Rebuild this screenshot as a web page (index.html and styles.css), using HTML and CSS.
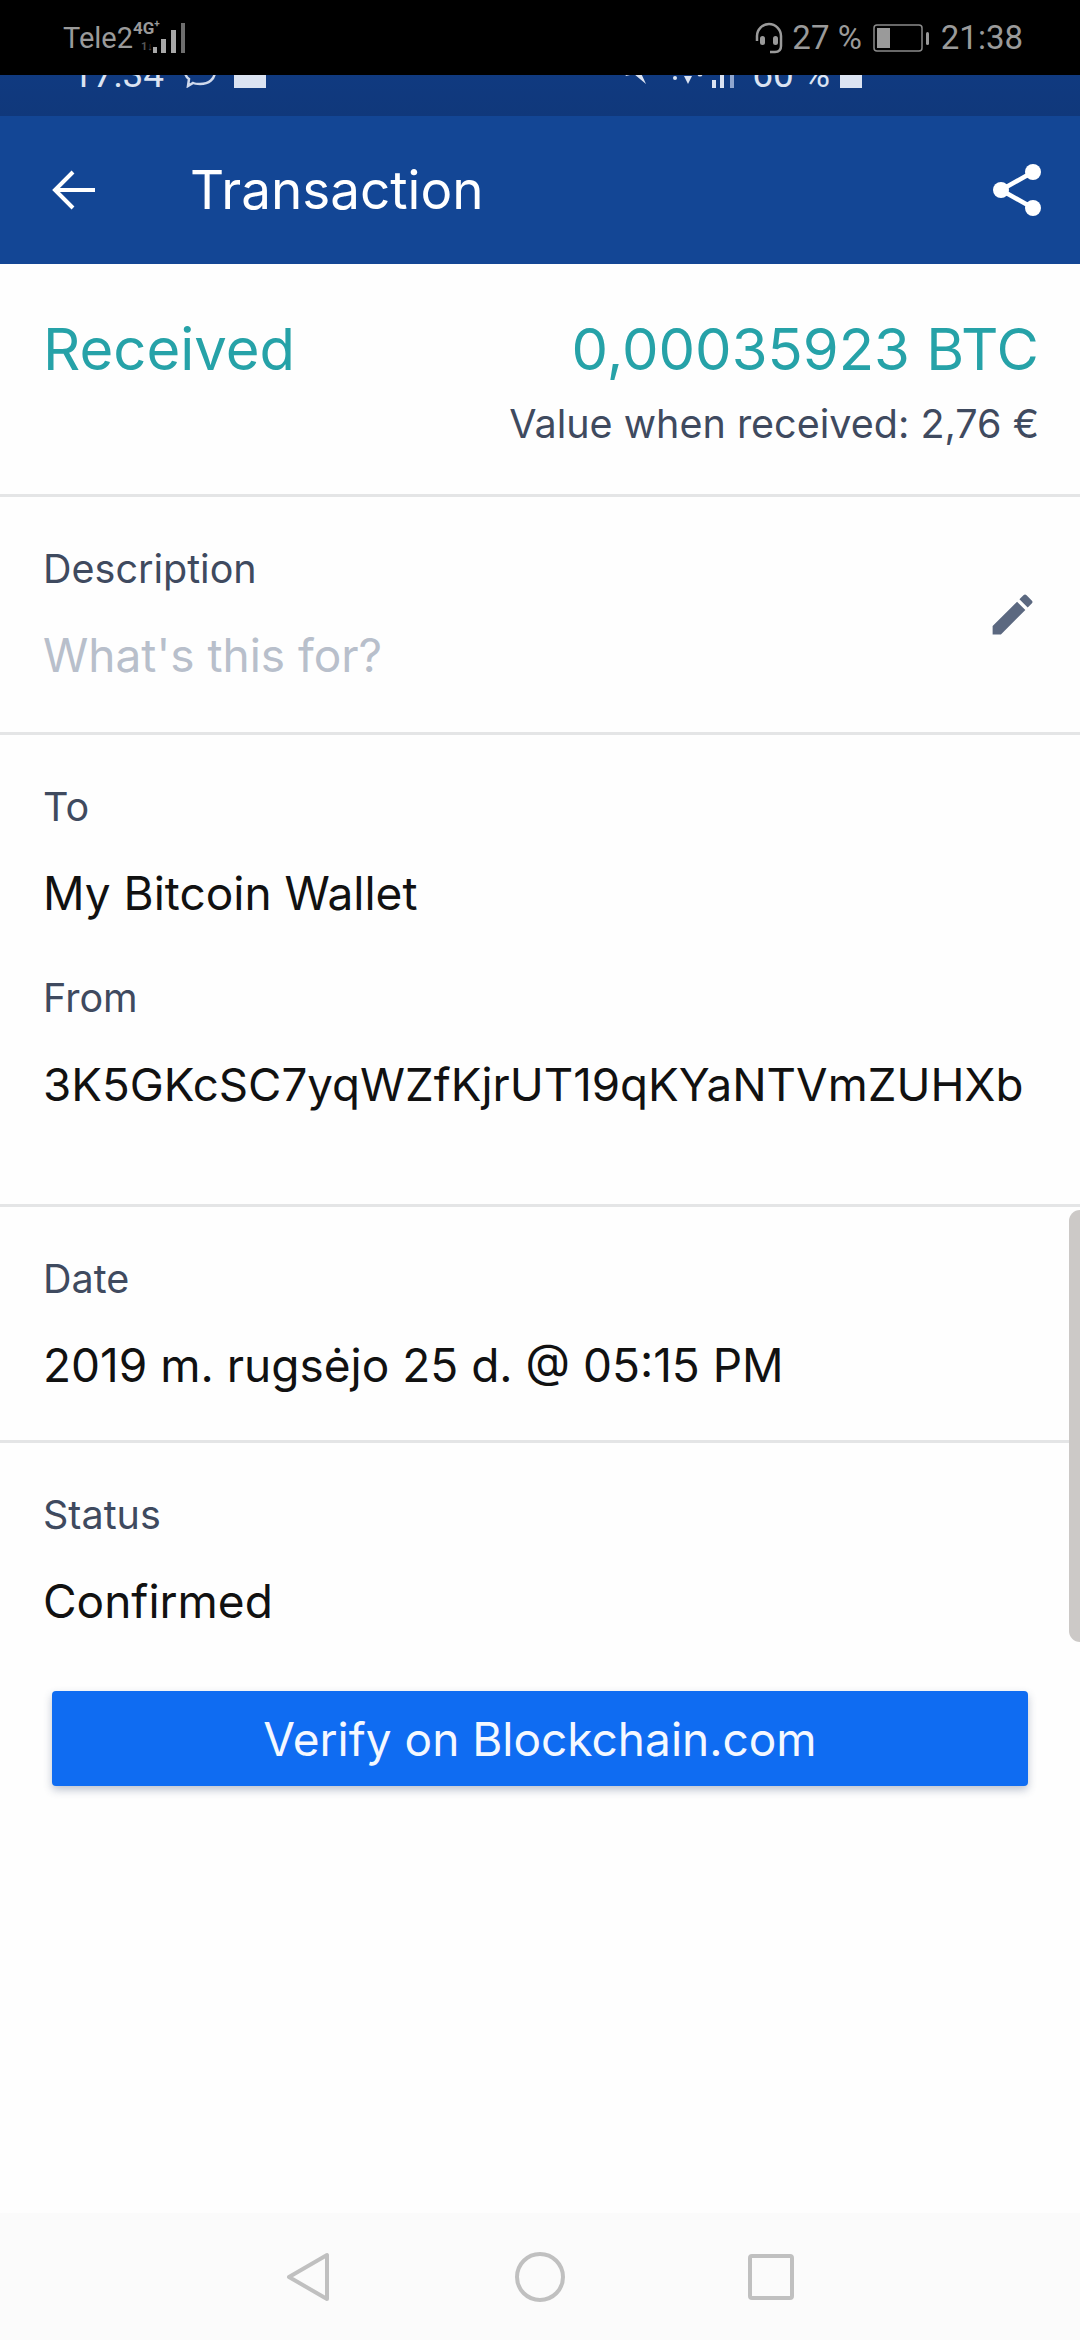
FILE: index.html
```html
<!DOCTYPE html>
<html lang="en">
<head>
    <meta charset="UTF-8">
    <meta name="viewport" content="width=device-width, initial-scale=1.0">
    <title>Transaction</title>
    <link rel="stylesheet" href="styles.css">
</head>
<body>
    <div class="phone">
        <div class="status-bar">
            <div class="status-left">
                <span class="carrier">Tele2</span>
                <div class="net-type">
                    <span class="net-name">4G<sup>+</sup></span>
                    <span class="net-arrows">1↓</span>
                </div>
                <svg class="signal" width="34" height="32" viewBox="0 0 34 32">
                    <rect x="0" y="25" width="4" height="6" fill="#a8a8a8"/>
                    <rect x="8" y="17" width="5" height="14" fill="#a8a8a8"/>
                    <rect x="18" y="8" width="5" height="23" fill="#a8a8a8"/>
                    <rect x="28" y="1" width="4" height="30" fill="#6e6e6e"/>
                </svg>
            </div>
            <div class="status-right">
                <svg class="headset" width="30" height="32" viewBox="0 0 30 32" fill="none">
                    <path d="M3 19v-5a12 12 0 0 1 24 0v10c0 4-2 6-6 6h-5" stroke="#9a9a9a" stroke-width="2.5"/>
                    <rect x="6" y="14" width="5" height="9" rx="2.5" fill="#9a9a9a"/>
                    <rect x="19" y="14" width="5" height="9" rx="2.5" fill="#9a9a9a"/>
                </svg>
                <span class="battery-pct">27 %</span>
                <svg class="battery" width="58" height="30" viewBox="0 0 58 30" fill="none">
                    <rect x="1" y="2" width="48" height="26" rx="3" stroke="#8a8a8a" stroke-width="1.5"/>
                    <rect x="4" y="5" width="13" height="20" fill="#9a9a9a"/>
                    <rect x="53" y="9" width="3" height="13" rx="1.5" fill="#9a9a9a"/>
                </svg>
                <span class="clock">21:38</span>
            </div>
        </div>

        <div class="inner-status">
            <div class="inner-left">
                <span class="inner-text">17:34</span>
                <svg class="inner-bubble" width="35" height="32" viewBox="0 0 35 32" fill="none">
                    <path d="M17 2c9 0 15 5 15 13s-6 13-15 13c-2 0-5 0-7-1l-5 3 1-7C3 21 2 18 2 15 2 7 8 2 17 2z" stroke="#cfd9ec" stroke-width="2.5"/>
                </svg>
                <span class="inner-square"></span>
            </div>
            <div class="inner-right">
                <svg width="31" height="30" viewBox="0 0 31 30">
                    <path d="M0 0h18l12 26-12-10-8 2z" fill="#dbe3f2"/>
                </svg>
                <svg class="inner-signal" width="67" height="30" viewBox="0 0 67 30">
                    <circle cx="5" cy="20" r="2" fill="#dbe3f2"/>
                    <path d="M14 18h8l-4 8z" fill="#dbe3f2"/>
                    <circle cx="30" cy="16" r="2.5" fill="#dbe3f2"/>
                    <rect x="42" y="22" width="4" height="8" fill="#dbe3f2"/>
                    <rect x="50" y="12" width="4" height="18" fill="#dbe3f2"/>
                    <rect x="60" y="6" width="4" height="24" fill="#8fa6cf"/>
                </svg>
                <span class="inner-text inner-pct">60 %</span>
                <span class="inner-battery"></span>
            </div>
        </div>

        <header class="app-bar">
            <svg class="back" width="44" height="44" viewBox="0 0 44 44" fill="none">
                <path d="M43 22H3M21 4 3 22l18 18" stroke="#fff" stroke-width="4"/>
            </svg>
            <h1>Transaction</h1>
            <svg class="share" width="48" height="54" viewBox="0 0 48 54" fill="none">
                <path d="M40 9 8 27l32 18" stroke="#fff" stroke-width="4.5"/>
                <circle cx="40" cy="9" r="8" fill="#fff"/>
                <circle cx="8" cy="27" r="8" fill="#fff"/>
                <circle cx="40" cy="45" r="8" fill="#fff"/>
            </svg>
        </header>

        <main class="content">
            <section class="section summary">
                <div class="summary-top">
                    <span class="received">Received</span>
                    <span class="amount">0,00035923 BTC</span>
                </div>
                <p class="fiat">Value when received: 2,76 €</p>
            </section>

            <section class="section description">
                <div>
                    <p class="label">Description</p>
                    <p class="value placeholder">What's this for?</p>
                </div>
                <svg class="edit" width="53" height="53" viewBox="0 0 24 24">
                    <path d="M3 17.25V21h3.75L17.81 9.94l-3.75-3.75L3 17.25zM20.71 7.04a1 1 0 0 0 0-1.41l-2.34-2.34a1 1 0 0 0-1.41 0l-1.83 1.83 3.75 3.75 1.83-1.83z" fill="#5b6880"/>
                </svg>
            </section>

            <section class="section parties">
                <p class="label">To</p>
                <p class="value">My Bitcoin Wallet</p>
                <p class="label from-label">From</p>
                <p class="value address">3K5GKcSC7yqWZfKjrUT19qKYaNTVmZUHXb</p>
            </section>

            <section class="section date">
                <p class="label">Date</p>
                <p class="value">2019 m. rugsėjo 25 d. @ 05:15 PM</p>
            </section>

            <section class="section last">
                <p class="label">Status</p>
                <p class="value">Confirmed</p>
            </section>

            <button class="verify">Verify on Blockchain.com</button>
        </main>

        <nav class="nav-bar">
            <svg width="46" height="50" viewBox="0 0 46 50" fill="none">
                <path d="M41 3v44L3 25z" stroke="#c0c0c0" stroke-width="4" stroke-linejoin="round"/>
            </svg>
            <svg width="50" height="50" viewBox="0 0 50 50" fill="none">
                <circle cx="25" cy="25" r="23" stroke="#c0c0c0" stroke-width="4"/>
            </svg>
            <svg width="46" height="46" viewBox="0 0 46 46" fill="none">
                <rect x="2" y="2" width="42" height="42" rx="2" stroke="#c0c0c0" stroke-width="4"/>
            </svg>
        </nav>

        <div class="scrollbar"></div>
    </div>
</body>
</html>
```

FILE: styles.css
```css
* {
    margin: 0;
    padding: 0;
    box-sizing: border-box;
}

body {
    background: #fff;
    font-family: 'Inter', sans-serif;
}

.phone {
    position: relative;
    width: 1080px;
    height: 2340px;
    display: flex;
    flex-direction: column;
    overflow: hidden;
    background: #fefefe;
}

/* barra del sistema */
.status-bar {
    height: 75px;
    background: #000;
    color: #9a9a9a;
    display: flex;
    justify-content: space-between;
    align-items: center;
    padding: 0 57px 0 63px;
    font-family: 'Roboto', sans-serif;
}

.status-left, .status-right {
    display: flex;
    align-items: center;
}

.carrier {
    font-size: 29px;
}

.net-type {
    display: flex;
    flex-direction: column;
    width: 24px;
    margin-left: 0;
    line-height: 14px;
}

.net-name {
    font-size: 17px;
    font-weight: 700;
    white-space: nowrap;
}

.net-name sup {
    font-size: 10px;
    line-height: 0;
}

.net-arrows {
    font-size: 11px;
    font-weight: 700;
    color: #555;
    margin: 5px 0 0 8px;
    white-space: nowrap;
}

.signal {
    margin-left: -4px;
}

.battery-pct {
    font-size: 33px;
    margin-left: 8px;
}

.battery {
    margin-left: 11px;
}

.clock {
    font-size: 33px;
    margin-left: 10px;
}

/* captura dentro de la captura, cortada por arriba */
.inner-status {
    height: 41px;
    background: linear-gradient(#103a80, #10387b);
    display: flex;
    justify-content: space-between;
    align-items: flex-end;
    overflow: hidden;
    padding: 0 218px 28px 72px;
    color: #dbe3f2;
}

.inner-left, .inner-right {
    display: flex;
    align-items: flex-end;
}

.inner-text {
    font-size: 37px;
    line-height: 26px;
    font-family: 'Roboto', sans-serif;
}

.inner-bubble {
    margin-left: 19px;
}

.inner-square, .inner-battery {
    display: block;
    background: #dbe3f2;
    height: 30px;
}

.inner-square {
    width: 32px;
    margin-left: 16px;
}

.inner-signal {
    margin-left: 23px;
}

.inner-pct {
    margin-left: 15px;
}

.inner-battery {
    width: 22px;
    margin-left: 10px;
}

.app-bar {
    height: 148px;
    background: #134695;
    display: flex;
    align-items: center;
    padding: 0 39px 0 52px;
    color: #fff;
}

.app-bar h1 {
    flex: 1;
    font-size: 53px;
    font-weight: 400;
    margin-left: 94px;
}

.section {
    padding: 50px 41px 0 43px;
    border-bottom: 3px solid #e4e5e6;
}

.summary {
    height: 233px;
    padding-top: 50px;
}

.summary-top {
    display: flex;
    justify-content: space-between;
    align-items: baseline;
    color: #26a2a8;
    font-size: 58px;
    line-height: 70px;
}

.fiat {
    text-align: right;
    font-size: 39.5px;
    line-height: 48px;
    color: #3f4a5f;
    margin-top: 16px;
}

.description {
    height: 238px;
    display: flex;
    justify-content: space-between;
    align-items: flex-start;
}

.label {
    font-size: 39.5px;
    line-height: 44px;
    color: #3f4a5f;
}

.value {
    font-size: 46px;
    line-height: 52px;
    color: #111;
    margin-top: 38px;
}

.placeholder {
    color: #b8bfcb;
}

.edit {
    align-self: center;
    margin: -50px 0 0 0;
}

.parties {
    height: 472px;
}

.from-label {
    margin-top: 57px;
}

.address {
    font-size: 45.7px;
    margin-top: 39px;
}

.date {
    height: 236px;
}

.last {
    height: 248px;
    border-bottom: 0;
}

.verify {
    display: block;
    width: 976px;
    height: 95px;
    margin: 0 auto;
    background: #0f6cf2;
    color: #f4f8ff;
    border: none;
    border-radius: 4px;
    font-family: 'Inter', sans-serif;
    font-size: 46px;
    box-shadow: 0 4px 8px rgba(40, 60, 100, 0.3);
}

.nav-bar {
    margin-top: auto;
    height: 127px;
    background: #fbfbfb;
    display: flex;
    justify-content: center;
    align-items: center;
    gap: 183px;
}

.scrollbar {
    position: absolute;
    top: 1210px;
    right: 0;
    width: 11px;
    height: 432px;
    background: #ccc9c7;
    border-radius: 11px 0 0 11px;
}
```
